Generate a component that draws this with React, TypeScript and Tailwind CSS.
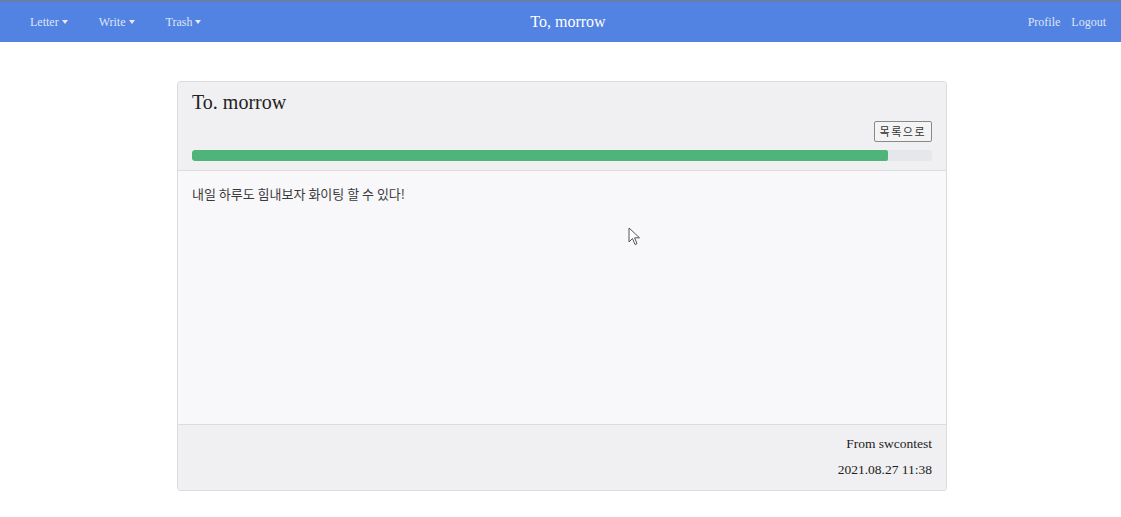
import React from "react";

const serif = "font-['Liberation_Serif','DejaVu_Serif',serif]";

function Caret() {
  return (
    <span className="ml-[3px] inline-block h-0 w-0 border-x-[3.5px] border-t-[4px] border-x-transparent border-t-[#e8ecf8] align-[2px]" />
  );
}

function NavBar() {
  return (
    <nav className="flex h-[42px] items-center border-t-2 border-[#6a7da8] bg-[#5282e2] px-[30px] text-[12px] text-[#dfe6f8]">
      <div className="flex w-[400px] items-center gap-[31px]">
        {["Letter", "Write", "Trash"].map((m) => (
          <span key={m} className="flex items-center">
            {m}
            <Caret />
          </span>
        ))}
      </div>
      <div className="flex-1 text-center text-[16px] text-white">
        To, morrow
      </div>
      <div className="mr-[-15px] flex w-[400px] items-center justify-end gap-[11px]">
        <span>Profile</span>
        <span>Logout</span>
      </div>
    </nav>
  );
}

function Cursor() {
  return (
    <svg
      className="absolute left-[628px] top-[227px]"
      width="14"
      height="20"
      viewBox="0 0 14 20"
    >
      <path
        d="M1 1 L1 15 L4.5 11.5 L7 17.5 L9 16.6 L6.6 10.8 L11.5 10.8 Z"
        fill="white"
        stroke="#555"
        strokeWidth="1"
        strokeLinejoin="round"
      />
    </svg>
  );
}

export default function App() {
  return (
    <div className={`relative h-[517px] w-[1121px] bg-white ${serif}`}>
      <NavBar />
      <div className="pl-[177px] pt-[39px]">
        <div className="w-[770px] overflow-hidden rounded-[3px] border border-[#dcdcdf]">
          <div className="border-b border-[#dcdcdf] bg-[#f0f0f2] px-[14px] pb-[9px] pt-[9px]">
            <h1 className="text-[20px] leading-[22px] text-[#222]">To. morrow</h1>
            <div className="mt-[8px] flex justify-end">
              <button className="h-[21px] rounded-[2px] border border-[#888] bg-[#f4f4f4] px-[5px] font-['Noto_Sans_CJK_KR',sans-serif] text-[11px] leading-none tracking-[1.5px] text-[#333]">
                목록으로
              </button>
            </div>
            <div className="mt-[8px] h-[11px] w-full overflow-hidden rounded-[3px] bg-[#e6e7ea]">
              <div className="h-full w-[94%] rounded-[2px] bg-[#4fb479]" />
            </div>
          </div>
          <div className="h-[254px] border-b border-[#dcdcdf] bg-[#f8f8fa] px-[14px] pt-[13px] font-['Noto_Sans_CJK_KR',sans-serif] text-[13px] text-[#3a3a3a]">
            내일 하루도 힘내보자 화이팅 할 수 있다!
          </div>
          <div className="flex h-[65px] flex-col items-end justify-between bg-[#f0f0f2] px-[14px] pb-[10px] pt-[9px] text-[13.5px] text-[#222]">
            <span>From swcontest</span>
            <span>2021.08.27 11:38</span>
          </div>
        </div>
      </div>
      <Cursor />
    </div>
  );
}
